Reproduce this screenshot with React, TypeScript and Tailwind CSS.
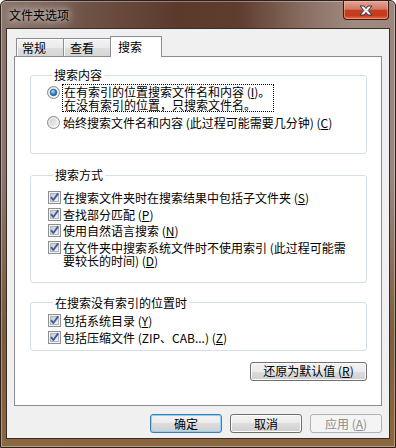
const Radio = ({ checked }: { checked?: boolean }) => (
  <svg width="13" height="13" viewBox="0 0 13 13" className="shrink-0">
    <defs>
      <linearGradient id="radio-bg" x1="0" y1="0" x2="1" y2="1">
        <stop offset="0" stopColor="#c9c9c9" />
        <stop offset="1" stopColor="#fbfbfb" />
      </linearGradient>
      <radialGradient id="radio-dot" cx="0.4" cy="0.35" r="0.75">
        <stop offset="0" stopColor="#b4e6ff" />
        <stop offset="0.45" stopColor="#3a93dc" />
        <stop offset="1" stopColor="#134b86" />
      </radialGradient>
    </defs>
    <circle cx="6.5" cy="6.5" r="6" fill="url(#radio-bg)" stroke="#8b8b8b" />
    <circle cx="6.5" cy="6.5" r="4.6" fill="none" stroke="#ffffff" strokeOpacity="0.7" />
    {checked && <circle cx="6.5" cy="6.5" r="3.3" fill="url(#radio-dot)" stroke="#1b4f86" strokeWidth="0.6" />}
  </svg>
);

const Check = () => (
  <svg width="13" height="13" viewBox="0 0 13 13" className="shrink-0">
    <defs>
      <linearGradient id="check-bg" x1="0" y1="0" x2="1" y2="1">
        <stop offset="0" stopColor="#c4c8cc" />
        <stop offset="1" stopColor="#f7f7f7" />
      </linearGradient>
    </defs>
    <rect x="0.5" y="0.5" width="12" height="12" fill="#f4f4f4" stroke="#8e8f8f" />
    <rect x="2.5" y="2.5" width="8" height="8" fill="url(#check-bg)" stroke="#b2b6ba" />
    <path d="M3 6.2 L5.3 9 L10.2 2.4" fill="none" stroke="#3c5ca4" strokeWidth="1.9" strokeLinejoin="round" />
  </svg>
);

type BtnProps = { children: React.ReactNode; kind?: "default" | "disabled" | "normal"; className?: string };

const WinButton = ({ children, kind = "normal", className = "" }: BtnProps) => {
  const look =
    kind === "disabled"
      ? "border-[#adb2b5] bg-[#f4f4f4] text-[#8d8d8d]"
      : kind === "default"
        ? "border-[#3c7fb1] bg-[linear-gradient(180deg,#f2f2f2_0%,#ebebeb_50%,#dddddd_50%,#cfcfcf_100%)] shadow-[inset_0_0_0_1px_#8fd0f5] text-black"
        : "border-[#707070] bg-[linear-gradient(180deg,#f2f2f2_0%,#ebebeb_50%,#dddddd_50%,#cfcfcf_100%)] shadow-[inset_0_0_0_1px_#fcfcfc] text-black";
  return (
    <div className={`h-[19px] flex items-center justify-center rounded-[3px] border leading-[14px] ${look} ${className}`}>
      {children}
    </div>
  );
};

const Group = ({ title, className = "", children }: { title: string; className?: string; children: React.ReactNode }) => (
  <fieldset className={`border border-[#d5dfe5] rounded-[3px] ${className}`}>
    <legend className="ml-[5px] px-[2px] leading-[14px]">{title}</legend>
    {children}
  </fieldset>
);

const CheckRow = ({ children }: { children: React.ReactNode }) => (
  <div className="flex items-start gap-[2px] leading-[13px]">
    <Check />
    <span>{children}</span>
  </div>
);

const Key = ({ k }: { k: string }) => (
  <>
    (<span className="underline underline-offset-[1px]">{k}</span>)
  </>
);

export default function App() {
  return (
    <div
      className="w-[396px] h-[448px] flex flex-col border border-[#2e211b] rounded-t-[6px] px-[5px] pb-[8px] text-[12px] text-black font-['Noto_Sans_CJK_SC','Liberation_Sans',sans-serif] shadow-[inset_0_0_0_1px_rgba(255,255,255,0.35)] [background-image:linear-gradient(180deg,rgba(0,0,0,0)_0%,rgba(0,0,0,0)_40%,rgba(118,86,52,0.85)_75%,rgba(140,104,64,1)_100%),linear-gradient(90deg,#8a766d_0%,#6f5246_22%,#5b3a2c_45%,#5e3c2e_60%,#8b7165_78%,#a18b81_90%,#9b867d_100%)]"
    >
      {/* title bar */}
      <div className="h-[27px] flex items-start justify-between">
        <span className="mt-[7px] ml-[3px] leading-[14px] [text-shadow:0_0_6px_rgba(255,255,255,0.9),0_0_14px_rgba(255,255,255,0.7)]">
          文件夹选项
        </span>
        <div className="w-[46px] h-[19px] mr-[1px] flex items-center justify-center rounded-b-[4px] border border-t-0 border-[#3e1a12] shadow-[inset_0_0_0_1px_rgba(255,200,180,0.45)] bg-[linear-gradient(180deg,#e3a394_0%,#d27a66_45%,#c23f22_52%,#c7391b_80%,#e5704a_100%)]">
          <svg width="14" height="11" viewBox="0 0 14 11">
            <path
              d="M1 1 H5 L7 3.6 L9 1 H13 L9.2 5.5 L13 10 H9 L7 7.4 L5 10 H1 L4.8 5.5 Z"
              fill="#f4f6fa"
              stroke="#2f3644"
              strokeWidth="1"
              strokeLinejoin="round"
            />
          </svg>
        </div>
      </div>

      {/* client area */}
      <div className="flex-1 flex flex-col bg-[#f0f0f0] border border-[#3a2c25] pt-[7px]">
        <div className="relative z-10 mx-[7px] pl-[2px] h-[21px] -mb-px flex items-start">
          <div className="mt-[2px] w-[48px] h-[18px] border border-b-0 border-[#898c95] pl-[5px] pt-[2px] leading-[14px] bg-[linear-gradient(180deg,#f3f3f3_0%,#ebebeb_50%,#dedede_50%,#d6d6d6_100%)] shadow-[inset_1px_1px_0_#fff]">
            常规
          </div>
          <div className="-ml-px mt-[2px] w-[48px] h-[18px] border border-b-0 border-[#898c95] pl-[6px] pt-[2px] leading-[14px] bg-[linear-gradient(180deg,#f3f3f3_0%,#ebebeb_50%,#dedede_50%,#d6d6d6_100%)] shadow-[inset_1px_1px_0_#fff]">
            查看
          </div>
          <div className="-ml-px w-[52px] h-[21px] border border-b-0 border-[#898c95] bg-white pl-[7px] pt-[3px] leading-[14px]">
            搜索
          </div>
        </div>

        <div className="mx-[7px] h-[350px] bg-white border border-[#898c95] pl-[15px] pr-[14px] flex flex-col">
          <Group title="搜索内容" className="mt-[11px] pl-[16px] pt-[2px] pb-[24px]">
            <div className="flex items-start gap-[2px]">
              <div className="mt-[2px]">
                <Radio checked />
              </div>
              <div className="border border-dotted border-black px-[1px] pr-[3px] leading-[13px]">
                <div>
                  在有索引的位置搜索文件名和内容 <Key k="I" />。
                </div>
                <div>在没有索引的位置，只搜索文件名。</div>
              </div>
            </div>
            <div className="mt-[4px] flex items-start gap-[3px] leading-[13px]">
              <Radio />
              <span>
                始终搜索文件名和内容 (此过程可能需要几分钟) <Key k="C" />
              </span>
            </div>
          </Group>

          <Group title="搜索方式" className="mt-[14px] pl-[17px] pt-[9px] pb-[15px]">
            <div className="flex flex-col gap-[3.5px]">
              <CheckRow>
                在搜索文件夹时在搜索结果中包括子文件夹 <Key k="S" />
              </CheckRow>
              <CheckRow>
                查找部分匹配 <Key k="P" />
              </CheckRow>
              <CheckRow>
                使用自然语言搜索 <Key k="N" />
              </CheckRow>
              <CheckRow>
                在文件夹中搜索系统文件时不使用索引 (此过程可能需
                <br />
                要较长的时间) <Key k="D" />
              </CheckRow>
            </div>
          </Group>

          <Group title="在搜索没有索引的位置时" className="mt-[13px] pl-[17px] pt-[4.5px] pb-[6px]">
            <div className="flex flex-col gap-[3.5px]">
              <CheckRow>
                包括系统目录 <Key k="Y" />
              </CheckRow>
              <CheckRow>
                包括压缩文件 (ZIP、CAB...) <Key k="Z" />
              </CheckRow>
            </div>
          </Group>

          <div className="mt-[11px] flex justify-end">
            <WinButton className="w-[117px]">
              还原为默认值 <Key k="R" />
            </WinButton>
          </div>
        </div>

        <div className="mt-[8px] pr-[7px] flex justify-end gap-[8px]">
          <WinButton kind="default" className="w-[72px]">
            确定
          </WinButton>
          <WinButton className="w-[72px]">取消</WinButton>
          <WinButton kind="disabled" className="w-[72px]">
            应用 <Key k="A" />
          </WinButton>
        </div>
      </div>
    </div>
  );
}
